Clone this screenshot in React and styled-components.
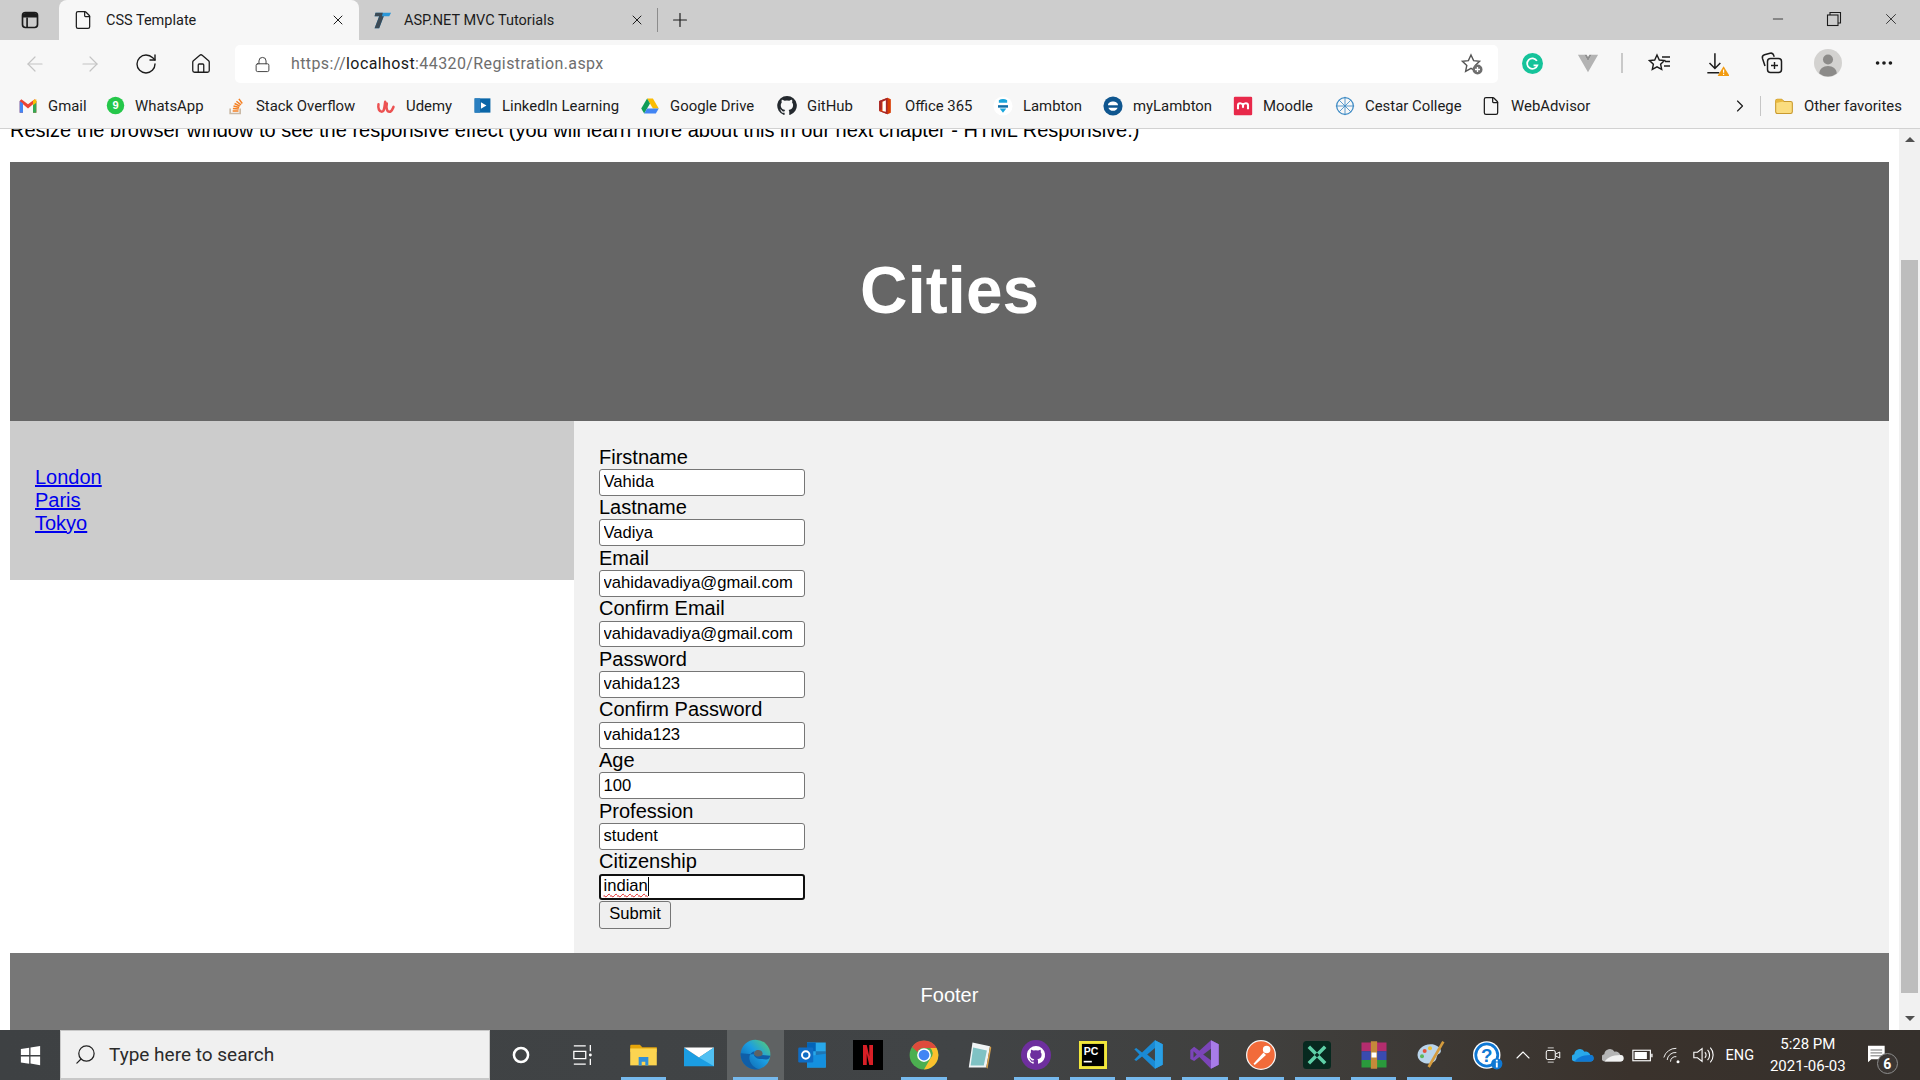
import React from "react";
import styled, { createGlobalStyle } from "styled-components";
import {
  ArrowLeft, ArrowRight, RotateCw, Home, Lock, ChevronRight, ChevronUp, X, Plus, Minus, MoreHorizontal, File, Search,
} from "lucide-react";

const Global = createGlobalStyle`
  html, body { margin: 0; padding: 0; width: 1920px; height: 1080px; overflow: hidden; }
  * { box-sizing: border-box; }
  #root { width: 1920px; height: 1080px; }
`;
const uiFont = `Roboto, "Noto Sans", sans-serif`;
const pageFont = `"Liberation Sans", Arial, sans-serif`;

const Screen = styled.div`display: flex; flex-direction: column; width: 1920px; height: 1080px; overflow: hidden; background: #fff;`;

/* ---------- tab strip ---------- */
const TabStrip = styled.div`display: flex; align-items: stretch; height: 40px; background: #cdcdcd; font-family: ${uiFont}; font-size: 14.5px; color: #1c1c1c; flex: none;`;
const SideButton = styled.div`width: 59px; display: flex; align-items: center; justify-content: center;`;
const Tab = styled.div`
  width: ${p => p.$w}px; display: flex; align-items: center; padding-left: ${p => p.$pl}px; padding-right: ${p => p.$pr}px; gap: ${p => p.$gap}px;
  background: ${p => (p.$active ? "#f7f7f7" : "transparent")}; border-radius: 8px 8px 0 0;
`;
const TabTitle = styled.span`flex: 1; white-space: nowrap;`;
const Separator = styled.div`width: 1px; height: 24px; background: #8c8c8c; align-self: center;`;
const NewTab = styled.div`width: 44px; display: flex; align-items: center; justify-content: center;`;
const WindowControls = styled.div`margin-left: auto; display: flex; align-items: center; padding-right: 1px;`;
const WindowButton = styled.div`width: 56.5px; display: flex; align-items: center; justify-content: center; height: 40px; margin-top: -2px;`;

/* ---------- toolbar ---------- */
const Toolbar = styled.div`display: flex; align-items: center; height: 49px; padding-top: 1px; padding-bottom: 4px; background: #f7f7f7; flex: none; padding-left: 11px;`;
const NavButton = styled.div`width: 55.5px; display: flex; align-items: center; justify-content: center; flex: none; color: ${p => (p.$dim ? "#c4c4c4" : "#1c1c1c")};`;
const NavRow = styled.div`display: flex; align-items: center; width: 228px; flex: none; margin-left: -4px; margin-top: 1px;`;
const AddressBar = styled.div`width: 1263px; height: 38px; margin-top: 2px; background: #fff; border-radius: 5px; display: flex; align-items: center; padding-left: 19px; padding-right: 14px; flex: none; font-family: ${uiFont}; font-size: 16px; color: #6e6e6e;`;
const UrlText = styled.div`margin-left: 20px; flex: 1; white-space: nowrap; letter-spacing: 0.4px; margin-top: -1px;`;
const UrlHost = styled.span`color: #1a1a1a;`;
const ToolIcons = styled.div`display: flex; align-items: center; flex: none; margin-left: 6px;`;
const ToolIcon = styled.div`width: 56px; display: flex; align-items: center; justify-content: center;`;
const ToolSep = styled.div`width: 2px; height: 20px; background: #c9c9c9; margin: 0 9px 0 5px;`;

/* ---------- bookmarks ---------- */
const Bookmarks = styled.div`display: flex; align-items: center; height: 40px; padding-left: 18px; padding-bottom: 6px; background: #f7f7f7; border-bottom: 1px solid #d2d2d2; flex: none; font-family: ${uiFont}; font-size: 14.9px; color: #1c1c1c;`;
const Bookmark = styled.div`width: ${p => p.$w}px; display: flex; align-items: center; flex: none; white-space: nowrap;`;
const BookmarkIcon = styled.div`width: 20px; height: 20px; display: flex; align-items: center; justify-content: center; margin-right: 10px; flex: none;`;
const MoreArrow = styled.div`width: 20px; margin-left: 102px; display: flex; justify-content: center; color: #1c1c1c;`;
const BarSep = styled.div`width: 1px; height: 20px; background: #c6c6c6; margin-left: 10px; margin-right: 13px;`;

/* ---------- page ---------- */
const Viewport = styled.div`flex: 1; display: flex; min-height: 0; background: #fff;`;
const Scroller = styled.div`width: 1899px; overflow: hidden; padding: 0 10px; font-family: ${pageFont}; font-size: 20px; color: #000;`;
const Intro = styled.p`margin: -10.5px 0 20px; line-height: 23px; white-space: nowrap;`;
const Header = styled.header`height: 259px; background: #666; display: flex; align-items: center; justify-content: center;`;
const HeaderTitle = styled.h2`margin: 0; color: #fff; font-size: 65.8px; font-weight: bold; line-height: 1;`;
const Section = styled.section`display: flex; align-items: flex-start; background: #fff;`;
const Nav = styled.nav`width: 564px; flex: none; background: #ccc; padding: 45px 25px 45px;`;
const NavList = styled.ul`list-style: none; margin: 0; padding: 0;`;
const NavItem = styled.li`line-height: 23px;`;
const NavLink = styled.a`color: #0000ee; text-decoration: underline;`;
const Article = styled.article`flex: 1; background: #f1f1f1; padding: 25px 25px 25px; height: 532px;`;
const Form = styled.form`display: flex; flex-direction: column; align-items: flex-start;`;
const Label = styled.label`display: block; line-height: 23.8px; height: 23.8px; white-space: nowrap;`;
const Input = styled.input`
  display: block; width: 206px; height: 26.8px; margin-top: -0.5px; margin-bottom: 0.5px; border: 1.25px solid #767676; border-radius: 3px; background: #fff;
  padding: 0 3.5px 0.5px; font-family: ${pageFont}; font-size: 16.6px; color: #000; outline: none;
`;
const FocusedInput = styled.div`
  display: flex; align-items: center; width: 206px; height: 26.8px; margin-top: -0.5px; border: 2.5px solid #101010; border-radius: 3px; background: #fff;
  padding: 0 2.5px 1px; font-size: 16.6px; color: #000;
`;
const Misspelled = styled.span`text-decoration: underline wavy #e02020; text-decoration-thickness: 1px; text-underline-offset: 2px; text-decoration-skip-ink: none;`;
const Caret = styled.span`display: inline-block; width: 1px; height: 19px; background: #000;`;
const SubmitButton = styled.button`
  display: block; width: 72px; height: 28px; margin-top: 0.5px; border: 1.25px solid #767676; border-radius: 3px; background: #efefef;
  font-family: ${pageFont}; font-size: 16.6px; color: #000; padding: 0 0 2px;
`;
const Footer = styled.footer`height: 77px; background: #777; color: #fff; text-align: center; padding-top: 31px; line-height: 23px;`;
const ScrollBar = styled.div`width: 21px; flex: none; background: #f1f1f1; display: flex; flex-direction: column; align-items: center; padding-top: 8px;`;
const ArrowUp = styled.div`width: 0; height: 0; border-left: 5px solid transparent; border-right: 5px solid transparent; border-bottom: 5px solid #505050;`;
const ArrowDown = styled.div`width: 0; height: 0; border-left: 5px solid transparent; border-right: 5px solid transparent; border-top: 5px solid #505050; margin-top: 23px;`;
const Thumb = styled.div`width: 17px; height: 733px; margin-top: 118px; background: #bdbdbd; flex: none;`;

/* ---------- taskbar ---------- */
const Taskbar = styled.div`display: flex; align-items: stretch; height: 50px; flex: none; background: linear-gradient(90deg, #3e4143 0%, #414446 50%, #40403e 65%, #3a322c 85%, #35302c 100%); color: #fff; font-family: ${uiFont};`;
const StartButton = styled.div`width: 60px; display: flex; align-items: center; justify-content: center; flex: none;`;
const SearchBox = styled.div`width: 430px; flex: none; background: #f0f0f0; border: 1.5px solid #c8c8c8; border-bottom-width: 2px; display: flex; align-items: center; gap: 12px; padding-left: 13px; color: #2b2b2b; font-size: 19px;`;
const SearchGlyph = styled(Search)`transform: scaleX(-1);`;
const TaskIcons = styled.div`display: flex; flex: none; margin-left: 1px;`;
const TaskIcon = styled.div`
  width: ${p => p.$w || 56.2}px; display: flex; align-items: center; justify-content: center; position: relative; flex: none; padding-bottom: 1px;
  padding-left: ${p => p.$pl || 0}px;
  background: ${p => (p.$active ? "#5f6263" : "transparent")};
`;
const RunBar = styled.span`position: absolute; left: 5.5px; right: 5.5px; bottom: 0; height: 3px; background: #76b9ed;`;
const Tray = styled.div`display: flex; align-items: center; flex: none;`;
const TrayIcon = styled.div`width: 30px; display: flex; align-items: center; justify-content: center;`;
const Lang = styled.div`font-size: 14.5px; width: 44px; text-align: center;`;
const Clock = styled.div`width: 90px; text-align: center; font-size: 15px; line-height: 22px; margin-left: 1px; margin-right: 6px;`;
const Notify = styled.div`width: 48px; display: flex; align-items: center; justify-content: flex-start; padding-left: 9px; position: relative; height: 50px;`;
const NotifyBadge = styled.span`position: absolute; left: 18px; top: 23px; width: 21px; height: 21px; border-radius: 50%; background: #3b3633; border: 1px solid #8d8d8d; font-size: 14px; font-weight: 700; display: flex; align-items: center; justify-content: center;`;

/* ---------- drawings ---------- */
const I = ({ s = 20, v = "0 0 24 24", children }) => <svg width={s} height={s} viewBox={v} fill="none">{children}</svg>;

const SideIcon = () => <I s={20}><rect x="3" y="3" width="18" height="18" rx="3.5" stroke="#1c1c1c" strokeWidth="2"/><path d="M3 7.5a4 4 0 0 1 4-4h10a4 4 0 0 1 4 4V9H3z" fill="#1c1c1c"/><path d="M8.5 9v12" stroke="#1c1c1c" strokeWidth="2"/></I>;
const TLogo = () => <I s={22}><path d="M6 4h17l-2 4h-6l-5 13H5l5-13H5z" fill="#2a97d8"/><path d="M6 4h8l-1 4H5zM10 8h5l-5 13H5z" fill="#3c4a55"/></I>;
const Restore = () => <I s={16} v="0 0 16 16"><rect x="1.5" y="4" width="10.5" height="10.5" stroke="#1c1c1c" strokeWidth="1.1"/><path d="M4 4V1.5h10.5V12H12" stroke="#1c1c1c" strokeWidth="1.1"/></I>;

const FavAdd = () => <I s={24}><path d="M11 3l2.6 5.6 6 .7-4.4 4.1 1.2 6-5.4-3-5.4 3 1.2-6L2.4 9.3l6-.7z" stroke="#555" strokeWidth="1.4"/><circle cx="17.5" cy="17.5" r="5" fill="#6e6e6e"/><path d="M17.5 15v5M15 17.5h5" stroke="#fff" strokeWidth="1.3"/></I>;
const Grammarly = () => <I s={21}><circle cx="12" cy="12" r="12" fill="#15c39a"/><path d="M17 9a6 6 0 1 0 .6 5h-4.4" stroke="#fff" strokeWidth="2"/></I>;
const VueGrey = () => <I s={22}><path d="M1 3h7l4 7 4-7h7L12 22z" fill="#b3b3b3"/><path d="M8 3l4 7 4-7h-2.5L12 5.5 10.5 3z" fill="#8e8e8e"/></I>;
const Favorites = () => <I s={24}><path d="M9 4l2.3 5 5.2.6-3.9 3.6 1.1 5.2L9 15.8l-4.7 2.6 1.1-5.2L1.5 9.6 6.7 9z" stroke="#1c1c1c" strokeWidth="1.4"/><path d="M14 6h8M17 10.5h5M16 15h6" stroke="#1c1c1c" strokeWidth="1.4"/></I>;
const Download = () => <I s={26}><path d="M11 3v14M6 12l5 5 5-5M4 21h11" stroke="#1c1c1c" strokeWidth="1.4"/><path d="M19 15l5.5 9h-11z" fill="#f29b10"/><path d="M19 18v3M19 22v1" stroke="#fff" strokeWidth="1.1"/></I>;
const Collections = () => <I s={24}><rect x="7.5" y="7.5" width="14" height="14" rx="3" stroke="#1c1c1c" strokeWidth="1.5"/><path d="M14.5 11v7M11 14.5h7" stroke="#1c1c1c" strokeWidth="1.4"/><path d="M5 15L2.5 7.5a3 3 0 0 1 2-3.7L10 2.300a3 3 0 0 1 3.700 2l.5 1.500" stroke="#1c1c1c" strokeWidth="1.5"/></I>;
const Avatar = () => <I s={28}><circle cx="12" cy="12" r="12" fill="#d3d2d0"/><circle cx="12" cy="9" r="4.3" fill="#8c8b89"/><path d="M4.5 21c0-4 3.4-6.5 7.5-6.5s7.5 2.5 7.5 6.500a12 12 0 0 1-15 0z" fill="#8c8b89"/></I>;

const Gmail = () => <I s={20}><path d="M2 6v14h4V10l6 5 6-5v10h4V6l-2-2-8 6-8-6z" fill="#ea4335"/><path d="M2 6v14h4V9z" fill="#4285f4"/><path d="M22 6v14h-4V9z" fill="#34a853"/><path d="M18 5l4-1v4l-4 3z" fill="#fbbc04"/></I>;
const WhatsApp = () => <I s={19}><circle cx="12" cy="12" r="11" fill="#25c74a"/><text x="12" y="17" textAnchor="middle" fontFamily="Liberation Sans" fontWeight="700" fontSize="14" fill="#fff">9</text></I>;
const StackOverflow = () => <I s={20}><path d="M5 15v6h12v-6" stroke="#c9b9a6" strokeWidth="2"/><path d="M8 18h7M8.3 15l7 .6M9 12l6.8 1.7M10.3 9l6.3 3.2M12.5 6.3l5.5 4.3M15.5 3.5l4 5.5" stroke="#f48024" strokeWidth="1.8"/></I>;
const Udemy = () => <I s={20}><path d="M3 10c-1 5 1 9 4 9s3-5 4-12M13 9c-1 5 0 10 3 10s4-4 5-6" stroke="#ec5252" strokeWidth="3" strokeLinecap="round"/></I>;
const Linked = () => <I s={19}><rect x="2" y="3" width="20" height="18" fill="#0a66a8"/><rect x="2" y="3" width="7" height="18" fill="#2a7fc0"/><path d="M10 8l7 4-7 4z" fill="#fff"/></I>;
const Drive = () => <I s={20}><path d="M8.5 3h7l7 12h-7z" fill="#fbbc04"/><path d="M8.5 3L1.5 15l3.5 6 7-12z" fill="#0f9d58"/><path d="M5 21h14l3.5-6h-14z" fill="#4285f4"/></I>;
const ghPath = "M12 .5a11.7 11.7 0 0 0-3.7 22.8c.6.1.8-.3.8-.6v-2c-3.3.7-4-1.600-4-1.600-.5-1.400-1.300-1.700-1.300-1.700-1.100-.7.1-.7.1-.7 1.200.1 1.800 1.200 1.800 1.200 1 1.800 2.800 1.300 3.400 1 .1-.8.4-1.300.8-1.600-2.600-.3-5.400-1.300-5.400-5.800 0-1.300.5-2.300 1.200-3.100-.1-.3-.5-1.500.1-3.200 0 0 1-.3 3.200 1.200a11 11 0 0 1 5.800 0c2.200-1.500 3.200-1.200 3.200-1.200.6 1.700.2 2.900.1 3.200.8.8 1.200 1.900 1.200 3.100 0 4.500-2.800 5.500-5.400 5.800.4.4.8 1.100.8 2.200v3.300c0 .3.2.7.8.6A11.7 11.7 0 0 0 12 .5z";
const GithubMark = () => <I s={21}><path fill="#24292e" d={ghPath}/></I>;
const Office = () => <I s={22}><path d="M5 6l10-4 4 2v16l-4 2-10-4z" fill="#d83b01"/><path d="M5 6l10-4v20L5 18l8 1V5l-5 2v9l-3 2z" fill="#a4262c"/><path d="M9 7l4-2v14l-4-1z" fill="#fff"/></I>;
const Lambton = () => <I s={20}><circle cx="12" cy="12" r="11.5" fill="#fff"/><path d="M7 5c3-2 7-2 10 0v3H7z" fill="#18a6dc"/><path d="M6 11h12v3H6z" fill="#0f6ea8"/><path d="M8 15h8l-4 5z" fill="#18a6dc"/></I>;
const MyLambton = () => <I s={20}><circle cx="12" cy="12" r="11.5" fill="#0f568f"/><path d="M6 11c0-6 12-6 12 0H6zM6.5 14h11c-1 5-10 5-11 0z" fill="#fff"/></I>;
const Moodle = () => <I s={20}><rect x="1" y="1" width="22" height="22" rx="1.5" fill="#e8294a"/><path d="M6 16v-5c0-3 5-3 6 0 1-3 6-3 6 0v5M12 11v3" stroke="#fff" strokeWidth="2.5"/></I>;
const Cestar = () => <I s={20}><circle cx="12" cy="12" r="10" stroke="#3d8ac4" strokeWidth="1.5"/><path d="M12 1v22M1 12h22M5 5l14 14M19 5L5 19" stroke="#3d8ac4" strokeWidth="1"/></I>;
const Folder = () => <I s={22}><path d="M2 6a2 2 0 0 1 2-2h5l3 2.5h8a2 2 0 0 1 2 2V19a2 2 0 0 1-2 2H4a2 2 0 0 1-2-2z" fill="#fbdd7f" stroke="#c99a2e" strokeWidth="1.3"/><path d="M2 6a2 2 0 0 1 2-2h5l3 2.5-10 2z" fill="#e9b93f"/></I>;

const Windows = () => <I s={21}><path d="M1 4.5l9.5-1.500v8.500H1zM12 2.800L23 1v10.500H12zM1 13h9.500v8.500L1 20zM12 13h11v10l-11-1.800z" fill="#fff"/></I>;
const Cortana = () => <I s={20}><circle cx="12" cy="12" r="8.5" stroke="#fff" strokeWidth="3"/></I>;
const TaskView = () => <I s={22}><path d="M2 2h13M2 22h13M2 8h13v8H2zM20 1v7M20 16v7" stroke="#fff" strokeWidth="1.4"/><circle cx="20" cy="12" r="1.6" fill="#fff"/></I>;
const Explorer = () => <I s={29}><path d="M1 5a1 1 0 0 1 1-1h7l2 2h12v4H1z" fill="#e5a50a"/><path d="M1 7h22v14H1z" fill="#fcd450"/><path d="M8 21v-7h8v7h-2.5v-3h-3v3z" fill="#2f8fd8"/></I>;
const Mail = () => <I s={30}><path d="M0 6l12 8 12-8v15H0z" fill="#1b9de2"/><path d="M0 6h24l-12 8z" fill="#fff"/><path d="M12 14l12-8v15z" fill="#50c0f2"/></I>;
const Edge = () => (
  <I s={31}>
    <defs><linearGradient id="eg" x1="0" y1="1" x2="1" y2="0"><stop offset="0" stopColor="#0c59a4"/><stop offset=".55" stopColor="#1b9de2"/><stop offset="1" stopColor="#5fd36a"/></linearGradient></defs>
    <circle cx="12" cy="12" r="11.5" fill="url(#eg)"/>
    <path d="M23.5 13c-1 4-4 2.5-7 2.5-5 0-7-3.5-5-6 -3 .5-5 3.5-4 7 1 3.5 4 6.5 8 7C9 24.500 0 20 .5 11" fill="#0f5ea8"/>
    <path d="M12 9c3-1 5 0 5.5 2 .3 1.5-1 2.5-3.5 2.5S9.5 11.5 12 9z" fill="#5f6263"/>
  </I>
);
const Outlook = () => <I s={30}><rect x="8" y="2" width="15" height="20" fill="#28a8ea"/><rect x="8" y="2" width="7" height="7" fill="#0364b8"/><rect x="15" y="9" width="8" height="7" fill="#14447d" opacity=".5"/><path d="M8 13l15-2v11H8z" fill="#1490df"/><rect x="1" y="6" width="12" height="12" rx="1" fill="#0f6cc4"/><circle cx="7" cy="12" r="3" stroke="#fff" strokeWidth="1.6"/></I>;
const Netflix = () => <I s={30}><rect width="24" height="24" fill="#000"/><path d="M8 4h3l2 9V4h3v16h-3l-2-9v9H8z" fill="#d81f26"/></I>;
const Chrome = () => (
  <I s={30}>
    <circle cx="12" cy="12" r="11.5" fill="#4caf50"/>
    <path d="M12 .5a11.5 11.5 0 0 1 10 5.8H12a5.7 5.7 0 0 0-5.2 3.3L2.5 5.5A11.5 11.5 0 0 1 12 .5z" fill="#de4b3c"/>
    <path d="M22 6.3a11.5 11.5 0 0 1-10 17.2l5-8.500a5.7 5.7 0 0 0 0-8.700z" fill="#fbc02d"/>
    <circle cx="12" cy="12" r="5.5" fill="#fff"/><circle cx="12" cy="12" r="4.3" fill="#4285f4"/>
  </I>
);
const Notepad = () => <I s={30}><path d="M6 2l14 3-3 17H3z" fill="#f0f4f5"/><path d="M6.5 6l11 2.3-2.5 12H4.5z" fill="#7fc2c4"/><path d="M20 5l1 1-3 17-1-1z" fill="#d9a24d"/></I>;
const GithubApp = () => <I s={30}><circle cx="12" cy="12" r="12" fill="#6e2f9e"/><g transform="translate(4.5 4.5) scale(.62)"><path fill="#fff" d={ghPath}/></g></I>;
const PyCharm = () => <I s={28}><rect width="24" height="24" fill="#f2e73b"/><rect x="2.5" y="2.5" width="19" height="19" fill="#000"/><text x="4" y="12" fontFamily="Liberation Sans" fontWeight="700" fontSize="9" fill="#fff">PC</text><rect x="4" y="17" width="7" height="1.4" fill="#fff"/></I>;
const VSCode = () => <I s={31}><path d="M17 1l6 3v16l-6 3L7 13.5 2.5 17 1 16l4-4-4-4 1.5-1L7 10.5z" fill="#1a8ad4"/><path d="M17 1l6 3v16l-6 3z" fill="#2aa0e6"/><path d="M17 7v10l-6-5z" fill="#414446"/></I>;
const VStudio = () => <I s={31}><path d="M17 1l6 3v16l-6 3-9-9-4 3-3-1.500v-7L4 6l4 3z" fill="#7b45b8"/><path d="M17 1l6 3v16l-6 3z" fill="#a87ce8"/><path d="M17 7.5v9L11 12z" fill="#414446"/><path d="M3.5 9.5v5L6 12z" fill="#414446"/></I>;
const Postman = () => <I s={30}><circle cx="12" cy="12" r="11.5" fill="#f26b3a" stroke="#f5f5f5" strokeWidth="1"/><path d="M6 19l8-9 2 2-9 8z" fill="#fff"/><circle cx="16.5" cy="7.5" r="3" fill="#fff"/></I>;
const TealApp = () => <I s={28}><rect width="24" height="24" rx="3" fill="#07291f"/><path d="M5 5l6 6M19 5l-6 6M5 19l6-6M19 19l-6-6" stroke="#5fd0a8" strokeWidth="3"/></I>;
const WinRar = () => <I s={30}><rect x="2" y="2" width="20" height="7" fill="#b32d6e"/><rect x="2" y="9" width="20" height="7" fill="#3a4bb0"/><rect x="2" y="16" width="20" height="6" fill="#2a9a3c"/><rect x="9.5" y="1" width="5" height="22" fill="#c48a3a"/><rect x="10" y="10" width="4" height="4" fill="#fff"/></I>;
const Palette = () => <I s={32}><path d="M3 14C1 8 8 3 14 4c5 1 8 5 5 7-3 1-1 4-4 6-4 3-10 1-12-3z" fill="#b9d4ea"/><circle cx="8" cy="9" r="1.5" fill="#e5533c"/><circle cx="12" cy="7" r="1.5" fill="#f2c230"/><circle cx="6" cy="13" r="1.5" fill="#5cb85c"/><path d="M22 2L11 21" stroke="#d49b3d" strokeWidth="2"/></I>;

const HelpTray = () => <I s={30}><circle cx="11" cy="12" r="11" fill="#fff"/><circle cx="11" cy="12" r="8.8" fill="#fff" stroke="#0f78d4" strokeWidth="2.2"/><text x="11" y="17.5" textAnchor="middle" fontFamily="Liberation Sans" fontWeight="700" fontSize="15" fill="#0f78d4">?</text><circle cx="19" cy="19" r="4.5" fill="#0f78d4"/><rect x="18.3" y="18" width="1.5" height="4" fill="#fff"/><rect x="18.3" y="15.8" width="1.5" height="1.4" fill="#fff"/></I>;
const Meet = () => <I s={18}><rect x="3" y="6" width="12" height="12" rx="2" stroke="#fff" strokeWidth="1.3"/><path d="M15 11l6-3v8l-6-3" stroke="#fff" strokeWidth="1.3"/><path d="M5 2.5h8M5 21.5h8" stroke="#fff" strokeWidth="1"/></I>;
const Cloud = ({ a, b }) => <I s={22}><path d="M3 19a4 4 0 0 1-.5-7.9 6 6 0 0 1 11.2-2.6 5 5 0 0 1 6.3 3.5A3.5 3.5 0 0 1 20 19z" fill={a}/><path d="M3 19c3-4 8-7 17-7a3.500 3.500 0 0 1 0 7z" fill={b}/></I>;
const Battery = () => <I s={21}><rect x="1" y="6" width="20" height="12" stroke="#fff" strokeWidth="1.3"/><rect x="3" y="8" width="14" height="8" fill="#fff"/><rect x="22" y="10" width="1.5" height="4" fill="#fff"/></I>;
const Wifi = () => <I s={20}><path d="M1 15a15 15 0 0 1 15-11M5 18a10 10 0 0 1 11-9M9 20a6 6 0 0 1 7-6" stroke="#fff" strokeWidth="1.1"/><circle cx="18" cy="20" r="1.8" fill="#fff"/></I>;
const Volume = () => <I s={22}><path d="M2 9h4l5-4v14l-5-4H2z" stroke="#fff" strokeWidth="1.2"/><path d="M14 9a4 4 0 0 1 0 6M17 6.5a8 8 0 0 1 0 11M20 4a12 12 0 0 1 0 16" stroke="#fff" strokeWidth="1.2"/></I>;
const Message = () => <I s={20}><path d="M0 1h20v18H4l-4 4z" fill="#fff" transform="scale(1 .9)"/><path d="M3 6h14M3 9.5h14M3 13h14" stroke="#555" strokeWidth="1"/></I>;

const marks = [
  ["Gmail", 87, <Gmail />], ["WhatsApp", 121, <WhatsApp />], ["Stack Overflow", 150, <StackOverflow />],
  ["Udemy", 96, <Udemy />], ["LinkedIn Learning", 168, <Linked />], ["Google Drive", 137, <Drive />],
  ["GitHub", 98, <GithubMark />], ["Office 365", 118, <Office />], ["Lambton", 110, <Lambton />],
  ["myLambton", 130, <MyLambton />], ["Moodle", 102, <Moodle />], ["Cestar College", 146, <Cestar />],
  ["WebAdvisor", 147, <File size={20} strokeWidth={1.5} color="#1c1c1c" />],
];
const tasks = [
  { icon: <Explorer />, run: true }, { icon: <Mail /> }, { icon: <Edge />, run: true, active: true }, { icon: <Outlook /> }, { icon: <Netflix /> },
  { icon: <Chrome />, run: true }, { icon: <Notepad /> }, { icon: <GithubApp />, run: true }, { icon: <PyCharm />, run: true }, { icon: <VSCode />, run: true }, { icon: <VStudio />, run: true },
  { icon: <Postman />, run: true }, { icon: <TealApp />, run: true }, { icon: <WinRar />, run: true }, { icon: <Palette />, run: true },
];
const fields = [
  ["Firstname", "Vahida"], ["Lastname", "Vadiya"], ["Email", "vahidavadiya@gmail.com"],
  ["Confirm Email", "vahidavadiya@gmail.com"], ["Password", "vahida123"], ["Confirm Password", "vahida123"],
  ["Age", "100"], ["Profession", "student"],
];

export default function App() {
  return (
    <Screen>
      <Global />
      <TabStrip>
        <SideButton><SideIcon /></SideButton>
        <Tab $active $w={300} $pl={14} $pr={13} $gap={13}>
          <File size={20} strokeWidth={1.5} color="#1c1c1c" />
          <TabTitle>CSS Template</TabTitle>
          <X size={16} strokeWidth={1.5} />
        </Tab>
        <Tab $w={298} $pl={11} $pr={12} $gap={12}>
          <TLogo />
          <TabTitle>ASP.NET MVC Tutorials</TabTitle>
          <X size={16} strokeWidth={1.5} />
        </Tab>
        <Separator />
        <NewTab><Plus size={22} strokeWidth={1.3} /></NewTab>
        <WindowControls>
          <WindowButton><Minus size={16} strokeWidth={1.2} /></WindowButton>
          <WindowButton><Restore /></WindowButton>
          <WindowButton><X size={18} strokeWidth={1.1} /></WindowButton>
        </WindowControls>
      </TabStrip>
      <Toolbar>
        <NavRow>
          <NavButton $dim><ArrowLeft size={24} strokeWidth={1.2} /></NavButton>
          <NavButton $dim><ArrowRight size={24} strokeWidth={1.2} /></NavButton>
          <NavButton><RotateCw size={24} strokeWidth={1.4} /></NavButton>
          <NavButton><Home size={22} strokeWidth={1.4} /></NavButton>
        </NavRow>
        <AddressBar>
          <Lock size={17} strokeWidth={1.4} color="#444" />
          <UrlText>https://<UrlHost>localhost</UrlHost>:44320/Registration.aspx</UrlText>
          <FavAdd />
        </AddressBar>
        <ToolIcons>
          <ToolIcon><Grammarly /></ToolIcon>
          <ToolIcon><VueGrey /></ToolIcon>
          <ToolSep />
          <ToolIcon><Favorites /></ToolIcon>
          <ToolIcon><Download /></ToolIcon>
          <ToolIcon><Collections /></ToolIcon>
          <ToolIcon><Avatar /></ToolIcon>
          <ToolIcon><MoreHorizontal size={22} strokeWidth={2} color="#1c1c1c" /></ToolIcon>
        </ToolIcons>
      </Toolbar>
      <Bookmarks>
        {marks.map(([t, w, ic]) => (
          <Bookmark key={t} $w={w}><BookmarkIcon>{ic}</BookmarkIcon>{t}</Bookmark>
        ))}
        <MoreArrow><ChevronRight size={20} strokeWidth={1.4} /></MoreArrow>
        <BarSep />
        <Bookmark $w={120}><BookmarkIcon><Folder /></BookmarkIcon>Other favorites</Bookmark>
      </Bookmarks>
      <Viewport>
        <Scroller>
          <Intro>Resize the browser window to see the responsive effect (you will learn more about this in our next chapter - HTML Responsive.)</Intro>
          <Header><HeaderTitle>Cities</HeaderTitle></Header>
          <Section>
            <Nav>
              <NavList>
                <NavItem><NavLink href="#">London</NavLink></NavItem>
                <NavItem><NavLink href="#">Paris</NavLink></NavItem>
                <NavItem><NavLink href="#">Tokyo</NavLink></NavItem>
              </NavList>
            </Nav>
            <Article>
              <Form>
                {fields.map(([l, v]) => (
                  <React.Fragment key={l}>
                    <Label>{l}</Label>
                    <Input defaultValue={v} spellCheck={false} />
                  </React.Fragment>
                ))}
                <Label>Citizenship</Label>
                <FocusedInput><Misspelled>indian</Misspelled><Caret /></FocusedInput>
                <SubmitButton type="button">Submit</SubmitButton>
              </Form>
            </Article>
          </Section>
          <Footer>Footer</Footer>
        </Scroller>
        <ScrollBar>
          <ArrowUp />
          <Thumb />
          <ArrowDown />
        </ScrollBar>
      </Viewport>
      <Taskbar>
        <StartButton><Windows /></StartButton>
        <SearchBox><SearchGlyph size={23} strokeWidth={1.3} color="#222" />Type here to search</SearchBox>
        <TaskIcons>
          <TaskIcon $w={60}><Cortana /></TaskIcon>
          <TaskIcon $w={64}><TaskView /></TaskIcon>
          {tasks.map((t, i) => (
            <TaskIcon key={i} $active={t.active}>{t.icon}{t.run && <RunBar />}</TaskIcon>
          ))}
          <TaskIcon $w={50} $pl={10}><HelpTray /></TaskIcon>
        </TaskIcons>
        <Tray>
          <TrayIcon><ChevronUp size={24} strokeWidth={1.1} color="#fff" /></TrayIcon>
          <TrayIcon><Meet /></TrayIcon>
          <TrayIcon><Cloud a="#28a8ea" b="#0f78d4" /></TrayIcon>
          <TrayIcon><Cloud a="#b5b5b5" b="#f2f2f2" /></TrayIcon>
          <TrayIcon><Battery /></TrayIcon>
          <TrayIcon><Wifi /></TrayIcon>
          <TrayIcon><Volume /></TrayIcon>
          <Lang>ENG</Lang>
          <Clock>5:28 PM<br />2021-06-03</Clock>
          <Notify><Message /><NotifyBadge>6</NotifyBadge></Notify>
        </Tray>
      </Taskbar>
    </Screen>
  );
}
